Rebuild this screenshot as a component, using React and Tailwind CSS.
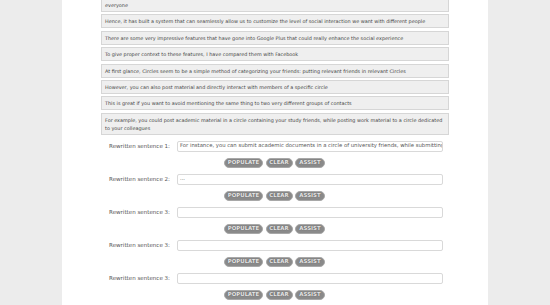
const sentences = [
  ["Google Plus has given a lot of thought to the fact that we do not want to share everything with", "everyone"],
  ["Hence, it has built a system that can seamlessly allow us to customize the level of social interaction we want with different people"],
  ["There are some very impressive features that have gone into Google Plus that could really enhance the social experience"],
  ["To give proper context to these features, I have compared them with Facebook"],
  ["At first glance, Circles seem to be a simple method of categorizing your friends: putting relevant friends in relevant Circles"],
  ["However, you can also post material and directly interact with members of a specific circle"],
  ["This is great if you want to avoid mentioning the same thing to two very different groups of contacts"],
  ["For example, you could post academic material in a circle containing your study friends, while posting work material to a circle dedicated", "to your colleagues"],
];

const rows = [
  { label: "Rewritten sentence 1:", value: "For instance, you can submit academic documents in a circle of university friends, while submitting work documents to a circle of co-workers" },
  { label: "Rewritten sentence 2:", value: "..." },
  { label: "Rewritten sentence 3:", value: "" },
  { label: "Rewritten sentence 3:", value: "" },
  { label: "Rewritten sentence 3:", value: "" },
  { label: "Rewritten sentence 3:", value: "" },
];

function Btn({ children, w }) {
  return (
    <button
      className={`${w} h-[10px] rounded-full bg-[#8a8a8a] border border-[#a8a8a8] text-[#e6e6e6] text-[5.4px] font-bold leading-none flex items-center justify-center [text-shadow:0_0_1px_#555]`}
    >
      {children}
    </button>
  );
}

export default function App() {
  return (
    <div className="h-[305px] w-[550px] overflow-hidden flex bg-[#ececec] font-['DejaVu_Sans',Verdana,sans-serif]">
      <div className="w-[62px] shrink-0" />
      <div className="w-[426px] shrink-0 bg-white">
        <div className="-mt-[10px] ml-[39px] w-[348px] flex flex-col gap-[2.4px]">
          {sentences.map((s, i) => (
            <div
              key={i}
              className="bg-[#efefef] border border-[#d6d6d6] px-[3px] py-[2px] text-[4.9px] leading-[8px] text-[#444] whitespace-nowrap overflow-hidden"
            >
              {s.map((line, j) => (
                <div key={j}>{line}</div>
              ))}
            </div>
          ))}
        </div>

        <div className="mt-[6px] flex flex-col">
          {rows.map((r, i) => (
            <div key={i} className="flex flex-col">
              <div className="flex items-center h-[11px]">
                <div className="w-[108px] shrink-0 text-right text-[5.55px] text-[#555]">{r.label}</div>
                <div className="ml-[7px] w-[266px] h-[11px] border border-[#d9d9d9] rounded-[2px] bg-white px-[2px] flex items-center overflow-hidden whitespace-nowrap text-[5.3px] text-[#555]">
                  {r.value}
                </div>
              </div>
              <div className="mt-[6px] mb-[6px] flex justify-center gap-[2.5px] pr-[1px]">
                <Btn w="w-[39px]">POPULATE</Btn>
                <Btn w="w-[27px]">CLEAR</Btn>
                <Btn w="w-[30px]">ASSIST</Btn>
              </div>
            </div>
          ))}
        </div>
      </div>
      <div className="flex-1" />
    </div>
  );
}
